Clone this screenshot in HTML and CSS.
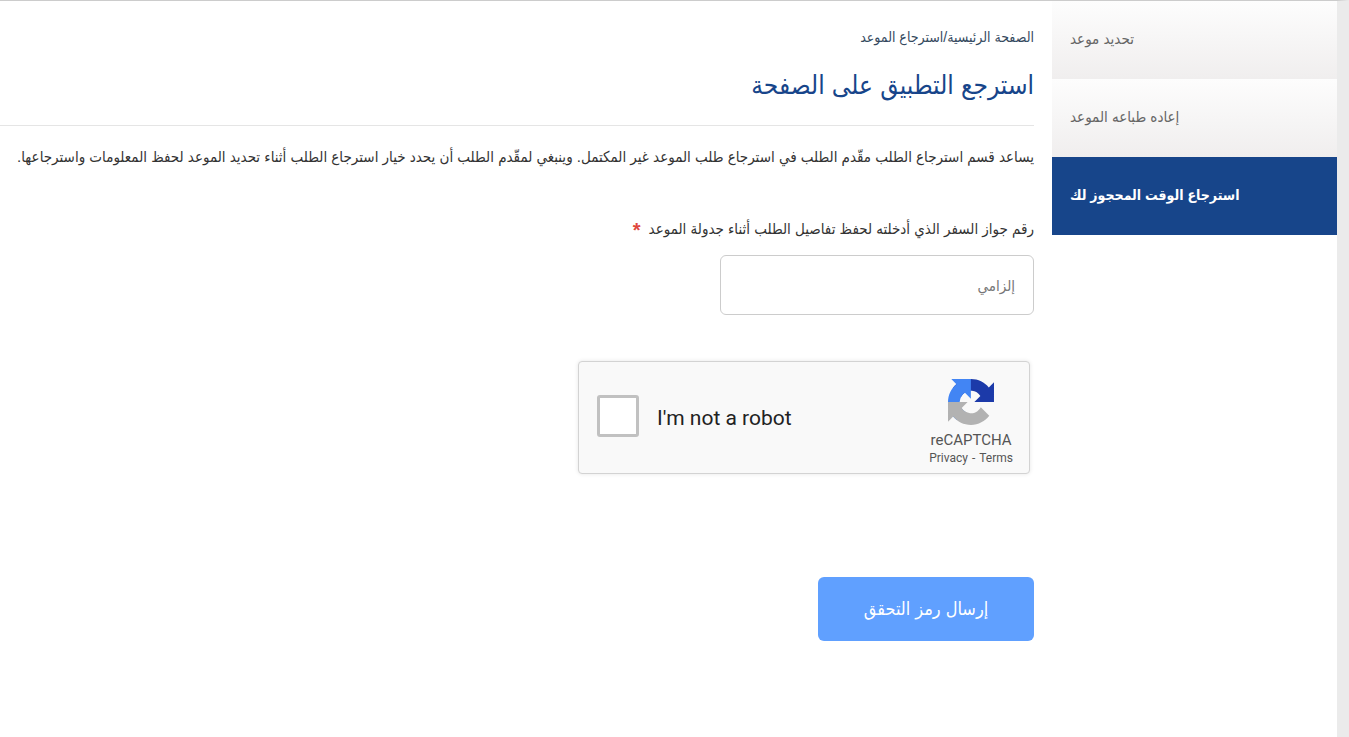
FILE: index.html
```html
<!DOCTYPE html>
<html lang="ar" dir="rtl">
<head>
  <meta charset="UTF-8" />
  <meta name="viewport" content="width=device-width, initial-scale=1.0" />
  <title>استرجاع الموعد</title>
  <link rel="stylesheet" href="styles.css">
</head>
<body>

  <div class="page">
    <!-- Side menu -->
    <nav class="side-menu">
      <a href="#">تحديد موعد</a>
      <a href="#">إعاده طباعه الموعد</a>
      <a href="#" class="active">استرجاع الوقت المحجوز لك</a>
    </nav>

    <!-- Content -->
    <main class="content">
      <div class="breadcrumb"><a href="#">الصفحة الرئيسية</a>/<span>استرجاع الموعد</span></div>
      <h1>استرجع التطبيق على الصفحة</h1>
      <p class="intro">يساعد قسم استرجاع الطلب مقّدم الطلب في استرجاع طلب الموعد غير المكتمل. وينبغي لمقّدم الطلب أن يحدد خيار استرجاع الطلب أثناء تحديد الموعد لحفظ المعلومات واسترجاعها.</p>

      <form class="retrieve-form">
        <label class="field-label" for="passport">رقم جواز السفر الذي أدخلته لحفظ تفاصيل الطلب أثناء جدولة الموعد <span class="required">*</span></label>
        <input type="text" class="field" id="passport" placeholder="إلزامي">

        <div class="captcha" dir="ltr">
          <input type="checkbox" class="captcha-box" id="robot">
          <label class="captcha-label" for="robot">I'm not a robot</label>
          <div class="captcha-brand">
            <svg class="captcha-logo" viewBox="0 0 64 64" aria-hidden="true">
              <path fill="#1c3aa9" d="M64 31.955l-.033-1.37V4.687l-7.16 7.16C50.948 4.674 42.033.093 32.05.093c-10.4 0-19.622 4.96-25.458 12.64l11.736 11.86a15.55 15.55 0 0 1 4.754-5.334c2.05-1.6 4.952-2.906 8.968-2.906.485 0 .86.057 1.135.163 4.976.393 9.288 3.14 11.828 7.124l-8.307 8.307L64 31.953"/>
              <path fill="#4285f4" d="M31.862.094l-1.37.033H4.594l7.16 7.16C4.58 13.147 0 22.06 0 32.046c0 10.4 4.96 19.622 12.64 25.458L24.5 45.768a15.55 15.55 0 0 1-5.334-4.754c-1.6-2.05-2.906-4.952-2.906-8.968 0-.485.057-.86.163-1.135.393-4.976 3.14-9.288 7.124-11.828l8.307 8.307L31.86.095"/>
              <path fill="#b2b2b2" d="M.001 32.045l.033 1.37v25.898l7.16-7.16c5.86 7.173 14.774 11.754 24.76 11.754 10.4 0 19.622-4.96 25.458-12.64l-11.736-11.86a15.55 15.55 0 0 1-4.754 5.334c-2.05 1.6-4.952 2.906-8.968 2.906-.485 0-.86-.057-1.135-.163-4.976-.393-9.288-3.14-11.828-7.124l8.307-8.307c-10.522.04-22.4.066-27.295-.005"/>
            </svg>
            <div class="captcha-name">reCAPTCHA</div>
            <div class="captcha-links"><a href="#">Privacy</a><span>-</span><a href="#">Terms</a></div>
          </div>
        </div>

        <button type="submit" class="submit-btn">إرسال رمز التحقق</button>
      </form>
    </main>
  </div>

</body>
</html>
```
FILE: styles.css
```css
* {
  box-sizing: border-box;
}

body {
  margin: 0;
  font-family: "Liberation Sans", "DejaVu Sans Condensed", "DejaVu Sans", sans-serif;
  font-size: 15px;
  color: #333;
  background: #fff;
}

a {
  color: inherit;
  text-decoration: none;
}

.page {
  display: flex;
  gap: 18px;
  min-height: 100vh;
  border-top: 1px solid #ccc;
  border-right: 12px solid #ebebeb;
}

.side-menu {
  flex: none;
  width: 285px;
}

.side-menu a {
  display: block;
  height: 78px;
  padding: 0 18px;
  line-height: 76px;
  text-align: left;
  color: #666;
  background: linear-gradient(#fdfdfd, #f0eeee);
}

.side-menu a.active {
  font-size: 14px;
  font-weight: bold;
  color: #fff;
  background: #17458a;
}

.content {
  flex: 1;
  min-width: 0;
  padding-top: 24px;
}

.breadcrumb {
  font-size: 14px;
  line-height: 24px;
  color: #34495e;
}

h1 {
  margin: 0;
  padding: 16px 0 20px;
  font-size: 26px;
  font-weight: normal;
  line-height: 40px;
  color: #17458a;
  border-bottom: 1px solid #e5e5e5;
}

.intro {
  margin: 19px 0 48px;
  line-height: 24px;
}

.retrieve-form {
  display: flex;
  flex-direction: column;
  align-items: flex-start;
}

.field-label {
  line-height: 24px;
}

.required {
  margin-right: 4px;
  font-size: 20px;
  font-weight: bold;
  line-height: 16px;
  vertical-align: -3px;
  color: #e0483e;
}

.field {
  width: 314px;
  height: 60px;
  margin: 14px 0 46px;
  padding: 0 18px;
  font: inherit;
  background: #fff;
  border: 1px solid #ccc;
  border-radius: 6px;
}

.field::placeholder {
  color: #777;
}

.captcha {
  display: flex;
  align-items: center;
  width: 452px;
  height: 113px;
  margin: 0 4px 103px;
  padding: 0 16px 0 18px;
  font-family: Roboto, sans-serif;
  background: #f9f9f9;
  border: 1px solid #d3d3d3;
  border-radius: 4px;
  box-shadow: 0 0 4px rgba(0, 0, 0, 0.1);
}

.captcha-box {
  appearance: none;
  width: 42px;
  height: 42px;
  margin: 0 18px 4px 0;
  background: #fff;
  border: 3px solid #c1c1c1;
  border-radius: 3px;
}

.captcha-label {
  flex: 1;
  font-size: 21px;
  color: #222;
}

.captcha-brand {
  padding-top: 10px;
  text-align: center;
  color: #555;
}

.captcha-logo {
  display: block;
  width: 46px;
  height: 46px;
  margin: 0 auto 6px;
}

.captcha-name {
  font-size: 15px;
  line-height: 18px;
}

.captcha-links {
  display: flex;
  justify-content: center;
  gap: 4px;
  font-size: 12px;
  line-height: 18px;
}

.submit-btn {
  width: 216px;
  height: 64px;
  padding: 0;
  font-family: inherit;
  font-size: 18px;
  color: #fff;
  background: #60a0ff;
  border: none;
  border-radius: 6px;
  cursor: pointer;
}
```
